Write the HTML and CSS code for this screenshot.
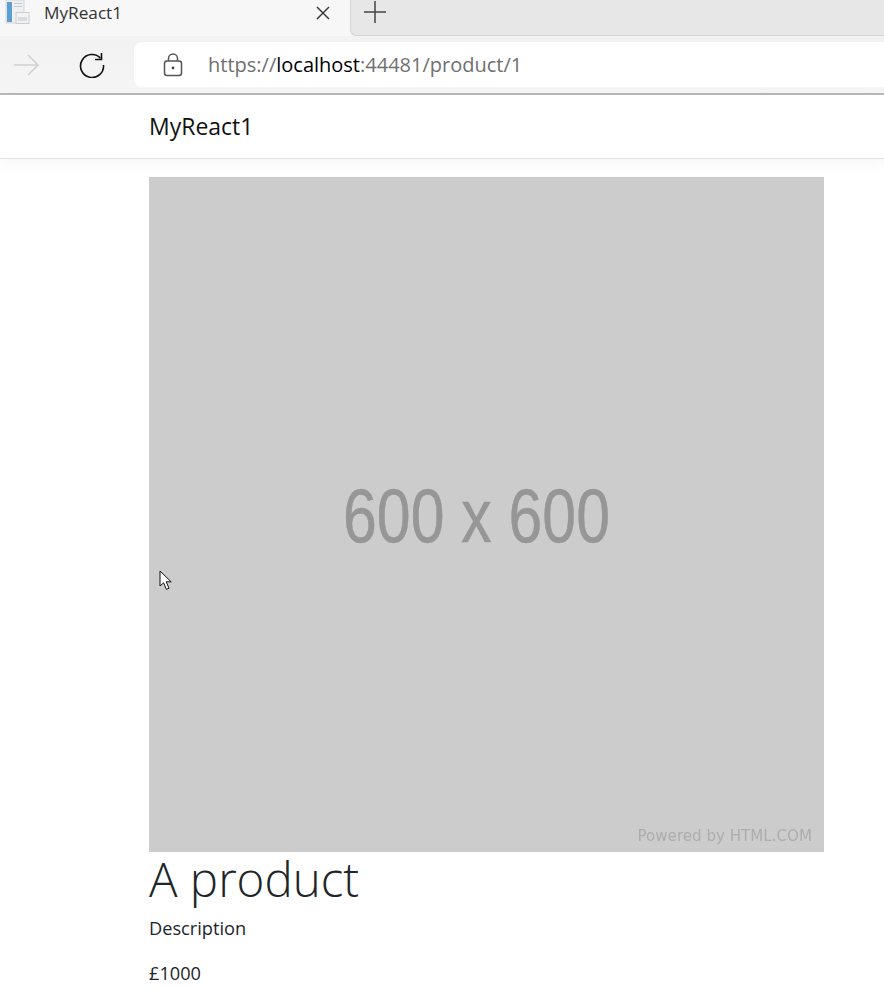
FILE: index.html
```
<!DOCTYPE html>
<html lang="en">
<head>
<meta charset="utf-8">
<title>MyReact1</title>
<link rel="stylesheet" href="styles.css">
</head>
<body>
<div class="browser">
  <div class="tabbar">
    <div class="tab">
      <svg class="favicon" width="30" height="24" viewBox="0 0 30 24">
        <rect x="6" y="0" width="18" height="23" fill="#eef0f2" stroke="#d4d8dc"/>
        <rect x="7" y="2" width="5" height="20" fill="#5b9fd0"/>
        <rect x="14" y="3" width="8" height="1" fill="#c4cad0"/>
        <rect x="14" y="6" width="8" height="1" fill="#c4cad0"/>
        <rect x="16" y="12.5" width="13" height="11" fill="#f2f3f5" stroke="#c9ced3"/>
        <rect x="18" y="17" width="9" height="4" fill="#d9dde1"/>
      </svg>
      <span class="tab-title">MyReact1</span>
      <svg class="tab-close" width="14" height="14" viewBox="0 0 14 14"><path d="M1 1 13 13M13 1 1 13" stroke="#3c3c3c" stroke-width="1.5" fill="none"/></svg>
    </div>
    <div class="tab-rest">
      <svg class="tab-plus" width="22" height="22" viewBox="0 0 22 22"><path d="M11 0V22M0 11H22" stroke="#444" stroke-width="1.5" fill="none"/></svg>
    </div>
  </div>
  <div class="toolbar">
    <svg class="nav-forward" width="26" height="22" viewBox="0 0 26 22"><path d="M1 11H25M15 1 25 11 15 21" stroke="#cfcfcf" stroke-width="1.5" fill="none"/></svg>
    <svg class="nav-reload" width="26" height="26" viewBox="0 0 26 26"><path d="M21.5 6.2A11.5 11.5 0 1 0 24.5 13" stroke="#111" stroke-width="1.6" fill="none"/><path d="M22.5 1V7.5H16" stroke="#111" stroke-width="1.6" fill="none"/></svg>
    <div class="address">
      <svg class="lock" width="20" height="24" viewBox="0 0 20 24"><rect x="1.5" y="8" width="17" height="14.5" rx="2.5" stroke="#555" stroke-width="1.5" fill="none"/><path d="M5.5 8V5.5a4.5 4.5 0 0 1 9 0V8" stroke="#555" stroke-width="1.5" fill="none"/><circle cx="10" cy="15" r="1.4" fill="#444"/></svg>
      <span class="url">https://<b class="host">localhost</b>:44481/product/1</span>
    </div>
  </div>
</div>
<header class="navbar"><a class="brand">MyReact1</a></header>
<main class="container">
  <div class="placeholder">
    <span class="ph-size">600 x 600</span>
    <span class="ph-credit">Powered by HTML.COM</span>
  </div>
  <h1 class="title">A product</h1>
  <p class="text">Description</p>
  <p class="text">£1000</p>
</main>
<svg class="cursor" width="14" height="21" viewBox="0 0 14 21"><path d="M1 1V16L4.6 12.8 7.4 19.4 10 18.2 7.2 11.8H12.2Z" fill="#fff" stroke="#111" stroke-width="1"/></svg>
</body>
</html>
```
FILE: styles.css
```
* { box-sizing: border-box; }
html, body { margin: 0; height: 988px; overflow: hidden; background: #fff; }
body { position: relative; font-family: "Open Sans", "Noto Sans", sans-serif; color: #212529; }

.browser { height: 95px; background: #f7f7f7; border-bottom: 2px solid #b9b9b9; }
.tabbar { display: flex; height: 36px; }
.tab { flex: none; width: 350px; height: 24px; display: flex; align-items: center; padding-right: 20px; }
.favicon { flex: none; margin-right: 14px; }
.tab-title { flex: 1; font-size: 17.2px; color: #333; }
.tab-close { flex: none; margin-top: 2px; }
.tab-rest { flex: 1; background: #e7e7e7; border-bottom: 1px solid #d5d5d5; border-left: 1px solid #d5d5d5; border-bottom-left-radius: 6px; padding: 1px 0 0 13px; }
.tab-plus { display: block; }
.toolbar { display: flex; align-items: center; height: 57px; padding: 6px 0 6px 13px; background: linear-gradient(#f2f2f2, #f5f5f5); }
.nav-forward { flex: none; margin-right: 40px; }
.nav-reload { flex: none; margin-right: 29px; }
.address { flex: 1; display: flex; align-items: center; height: 45px; background: #fff; border-radius: 8px 0 0 8px; padding-left: 29px; }
.lock { flex: none; margin-right: 25px; }
.url { font-size: 20px; color: #6f6f6f; }
.host { font-weight: 400; color: #000; }

.navbar { height: 64px; display: flex; align-items: center; padding: 0 0 2px 149px; border-bottom: 1px solid #e2e2e6; box-shadow: 0 4px 14px rgba(0,0,0,.045); }
.brand { font-size: 23px; color: #111; }

.container { padding: 18px 0 0 149px; }
.placeholder { position: relative; width: 675px; height: 675px; background: #ccc; display: flex; align-items: center; justify-content: center; }
.ph-size { font-family: "Liberation Sans", Arial, sans-serif; font-size: 60.75px; color: #969696; filter: blur(.6px); margin-left: -20px; margin-top: 2px; transform: scaleY(1.25); -webkit-text-stroke: .4px #969696; }
.ph-credit { position: absolute; right: 12px; bottom: 7px; font-family: "DejaVu Sans", sans-serif; font-size: 15.1px; color: #adadad; filter: blur(.3px); }
.title { margin: 0 0 9px; font-size: 47.5px; font-weight: 340; line-height: 54px; color: #212529; }
.text { margin: 0 0 18px; font-size: 18.2px; line-height: 27px; color: #212529; }
.cursor { position: absolute; left: 158.5px; top: 569.5px; }
```
